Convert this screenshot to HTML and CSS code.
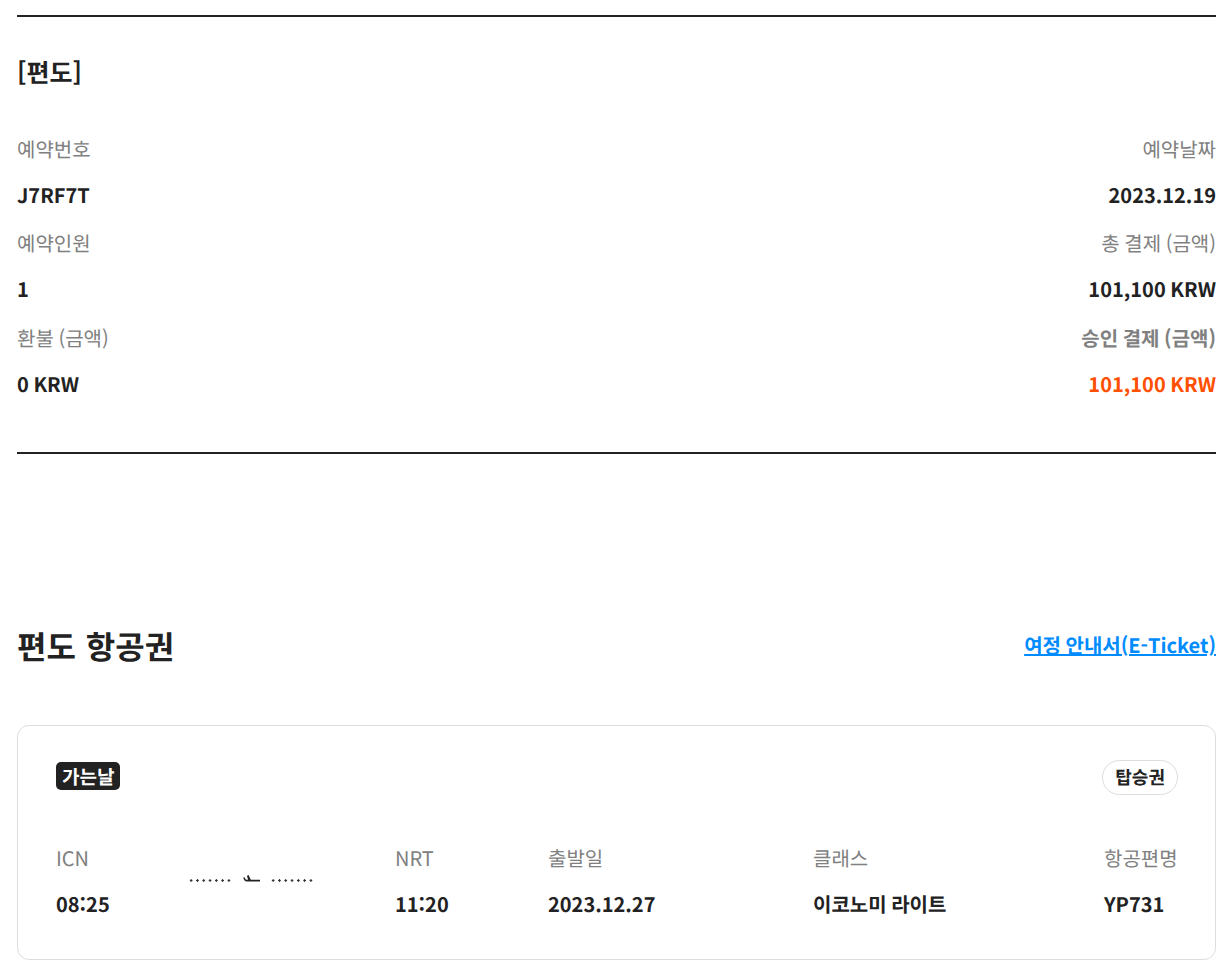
FILE: index.html
```html
<!DOCTYPE html>
<html lang="ko">
<head>
<meta charset="utf-8">
<title>편도 항공권</title>
<link rel="stylesheet" href="styles.css">
</head>
<body>
<section class="summary">
  <h2 class="summary-title">[편도]</h2>
  <div class="info-grid">
    <div class="label">예약번호</div><div class="label right">예약날짜</div>
    <div class="value">J7RF7T</div><div class="value right">2023.12.19</div>
    <div class="label">예약인원</div><div class="label right">총 결제 (금액)</div>
    <div class="value">1</div><div class="value right">101,100 KRW</div>
    <div class="label">환불 (금액)</div><div class="label right strong">승인 결제 (금액)</div>
    <div class="value">0 KRW</div><div class="value right accent">101,100 KRW</div>
  </div>
</section>
<section class="tickets">
  <header class="tickets-head">
    <h1 class="tickets-title">편도 항공권</h1>
    <a class="eticket" href="#">여정 안내서(E-Ticket)</a>
  </header>
  <article class="card">
    <div class="card-top">
      <span class="badge">가는날</span>
      <span class="pill">탑승권</span>
    </div>
    <div class="route">
      <div class="cell"><div class="label">ICN</div><div class="value">08:25</div></div>
      <div class="path">
        <span class="dots"></span>
        <svg class="plane" width="17" height="8" viewBox="0 0 17 8" aria-hidden="true">
          <path d="M.3 2.600 1.600 2.200C2 4 3 4.800 4.400 4.800H5L4 .8 5.600 0 7.800 4.800H17V6.600H4C2 6.600 .8 5 .3 2.600Z" fill="#222"/>
        </svg>
        <span class="dots"></span>
      </div>
      <div class="cell"><div class="label">NRT</div><div class="value">11:20</div></div>
      <div class="cell"><div class="label">출발일</div><div class="value">2023.12.27</div></div>
      <div class="cell"><div class="label">클래스</div><div class="value">이코노미 라이트</div></div>
      <div class="cell"><div class="label">항공편명</div><div class="value">YP731</div></div>
    </div>
  </article>
</section>
</body>
</html>
```
FILE: styles.css
```css
* { box-sizing: border-box; }
html, body { margin: 0; padding: 0; background: #fff; }
body {
  padding: 15px 13px 0 17px;
  color: #222;
  font-family: "Noto Sans CJK KR", "Noto Sans CJK JP", sans-serif;
  font-size: 20px;
  text-rendering: geometricPrecision;
  word-spacing: -1px;
  height: 970px;
  overflow: hidden;
}
.summary {
  border-top: 2px solid #222;
  border-bottom: 2px solid #222;
  height: 439px;
}
.summary-title {
  margin: 0;
  padding-top: 36px;
  font-size: 25px;
  line-height: 38px;
  font-weight: 700;
}
.info-grid {
  display: grid;
  grid-template-columns: 1fr 1fr;
  grid-auto-rows: 47.250px;
  margin-top: 34px;
  align-items: center;
}
.info-grid .value { padding-bottom: 2px; }
.label { color: #808080; font-size: 20px; line-height: 30px; font-weight: 400; white-space: nowrap; }
.value { color: #222; font-size: 20px; line-height: 30px; font-weight: 700; white-space: nowrap; }
.right { text-align: right; }
.strong { font-weight: 700; }
.accent { color: #ff5000; }
.tickets { margin-top: 166px; }
.tickets-head {
  display: flex;
  justify-content: space-between;
  align-items: center;
  height: 50px;
}
.tickets-title { margin: 2px 0 0; font-size: 32px; line-height: 46px; font-weight: 700; word-spacing: 1px; }
.eticket { color: #008cff; font-size: 20px; font-weight: 700; text-decoration: underline; margin-top: -2px; }
.card {
  margin-top: 55px;
  height: 235px;
  border: 1px solid #ddd;
  border-radius: 12px;
  padding: 34px 37px 0 38px;
}
.card-top {
  display: flex;
  justify-content: space-between;
  align-items: center;
  height: 36px;
}
.badge {
  background: #222;
  color: #fff;
  font-size: 19px;
  font-weight: 700;
  line-height: 30px;
  height: 28px;
  padding: 0 6px;
  border-radius: 5px;
  margin-top: -4px;
}
.pill {
  border: 1px solid #ddd;
  border-radius: 18px;
  height: 35px;
  padding: 0 12px;
  font-size: 18px;
  line-height: 32px;
  font-weight: 700;
  margin-top: -2px;
}
.route {
  display: grid;
  grid-template-columns: 126px 213px 153px 265px 291px 1fr;
  margin-top: 47px;
}
.cell { display: flex; flex-direction: column; gap: 16px; }
.path {
  display: flex;
  align-items: center;
  gap: 11px;
  padding: 0 0 0 6px;
  height: 46px;
  margin-top: 14px;
}
.dots {
  width: 44px;
  height: 3px;
  background-image: radial-gradient(circle, #333 1px, transparent 1.400px);
  background-size: 6.300px 3px;
}
.plane { display: block; margin-top: -2px; margin-right: -1px; }
```
